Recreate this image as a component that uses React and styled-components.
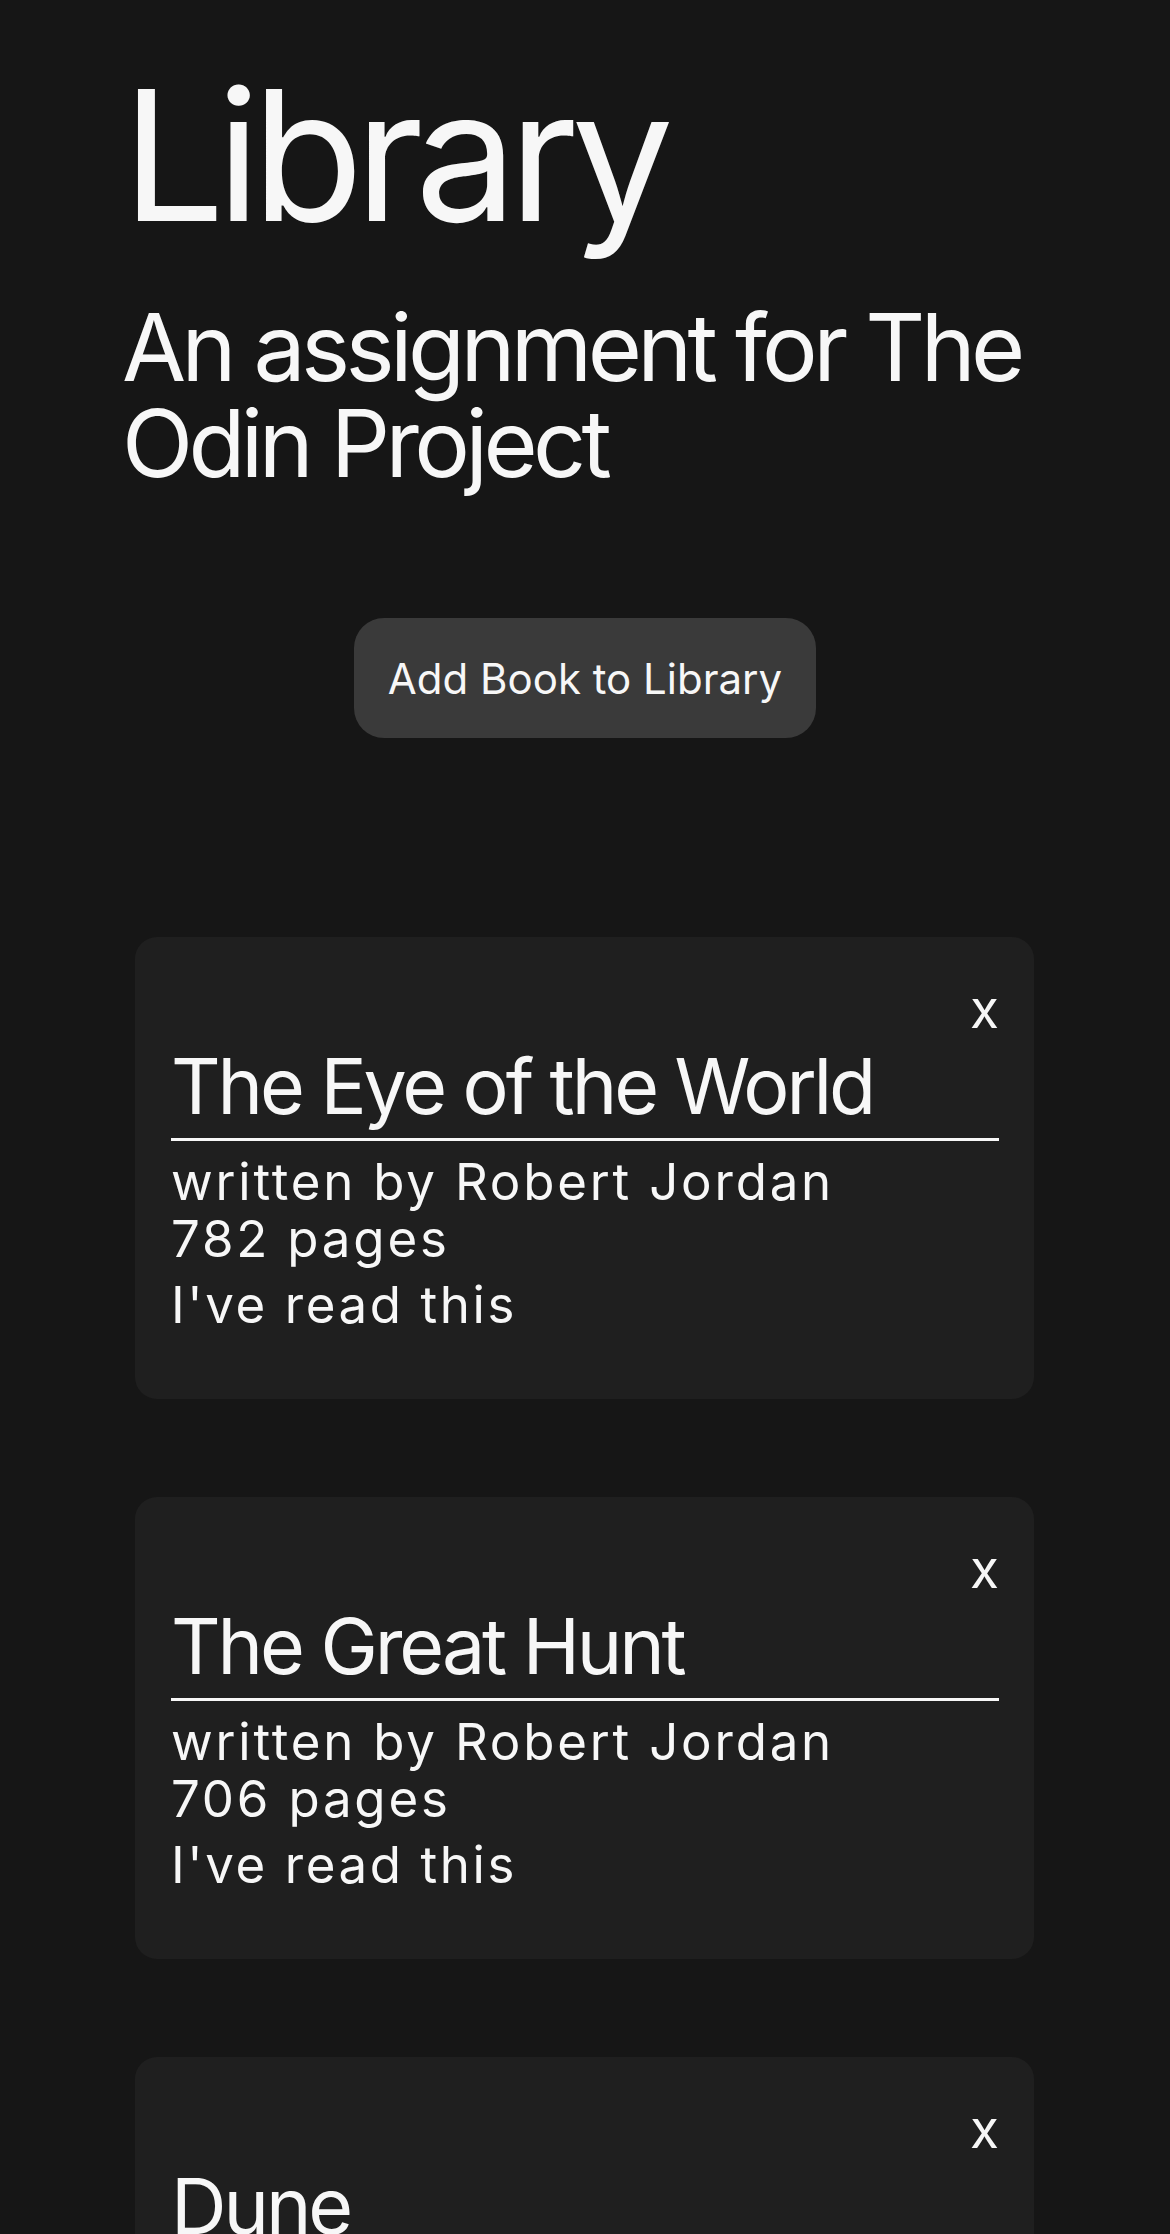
import React from 'react';
import styled, { createGlobalStyle } from 'styled-components';

const GlobalStyle = createGlobalStyle`
  * { box-sizing: border-box; }
  body {
    margin: 0;
    background: #161616;
    color: #f7f7f7;
    font-family: Inter, "Noto Sans", sans-serif;
  }
`;

const Page = styled.div`
  min-height: 100vh;
  padding-bottom: 80px;
`;

const Header = styled.header`
  padding: 64px 0 0 122px;
`;

const Title = styled.h1`
  margin: 0;
  font-size: 182px;
  font-weight: 400;
  line-height: 1;
  letter-spacing: -8.5px;
`;

const Subtitle = styled.h2`
  margin: 53px 0 0;
  font-size: 93px;
  font-weight: 400;
  line-height: 96px;
  letter-spacing: -4.6px;
  max-width: 960px;
`;

const Actions = styled.div`
  display: flex;
  justify-content: center;
  margin-top: 127px;
`;

const AddButton = styled.button`
  border: none;
  background: #3a3a3a;
  color: #f7f7f7;
  font-family: inherit;
  font-size: 42px;
  line-height: normal;
  padding: 35px 34px 34px;
  border-radius: 30px;
  cursor: pointer;
`;

const BookList = styled.main`
  display: flex;
  flex-direction: column;
  gap: 98px;
  width: 899px;
  margin: 199px 0 0 135px;
`;

const Card = styled.article`
  background: #1f1f1f;
  border-radius: 22px;
  padding: 40px 35px 66px 36px;
  display: flex;
  flex-direction: column;
`;

const RemoveButton = styled.button`
  align-self: flex-end;
  border: none;
  background: none;
  padding: 0;
  color: #f7f7f7;
  font-family: inherit;
  font-size: 53px;
  line-height: normal;
  cursor: pointer;
`;

const BookTitle = styled.h3`
  margin: -2px 0 0;
  font-size: 77px;
  font-weight: 400;
  line-height: normal;
  letter-spacing: -3.1px;
  padding-bottom: 5px;
  border-bottom: 3px solid #f7f7f7;
`;

const Details = styled.p`
  margin: 12px 0 0;
  font-size: 51px;
  line-height: 57px;
  letter-spacing: 2.8px;
`;

const ReadStatus = styled.div`
  margin-top: 9px;
  font-size: 51px;
  line-height: 57px;
  letter-spacing: 2.6px;
`;

const books = [
  { title: 'The Eye of the World', author: 'Robert Jordan', pages: 782, read: true },
  { title: 'The Great Hunt', author: 'Robert Jordan', pages: 706, read: true },
  { title: 'Dune', author: 'Frank Herbert', pages: 412, read: true },
];

const App = () => {
  return (
    <Page>
      <GlobalStyle />
      <Header>
        <Title>Library</Title>
        <Subtitle>An assignment for The Odin Project</Subtitle>
      </Header>

      <Actions>
        <AddButton>Add Book to Library</AddButton>
      </Actions>

      <BookList>
        {books.map((book) => (
          <Card key={book.title}>
            <RemoveButton>x</RemoveButton>
            <BookTitle>{book.title}</BookTitle>
            <Details>
              written by {book.author}
              <br />
              {book.pages} pages
            </Details>
            <ReadStatus>{book.read ? "I've read this" : "I haven't read this"}</ReadStatus>
          </Card>
        ))}
      </BookList>
    </Page>
  );
};

export default App;
